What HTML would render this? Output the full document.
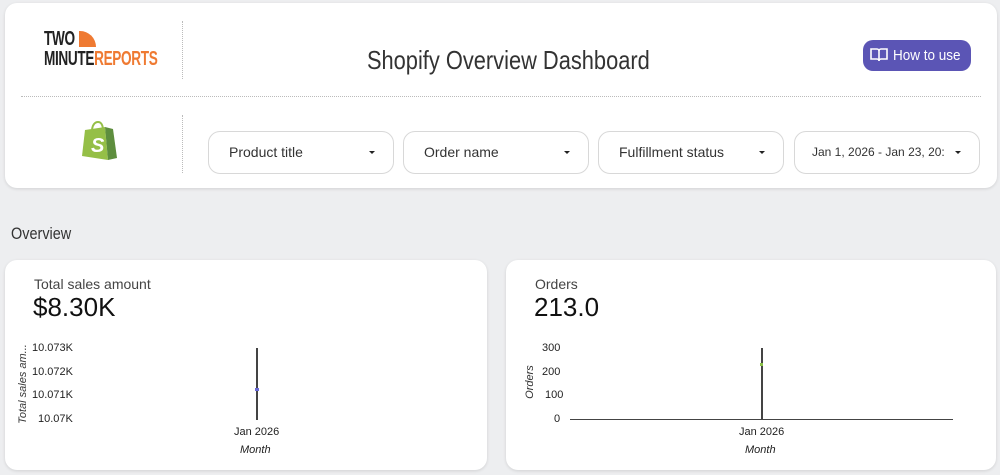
<!DOCTYPE html>
<html><head><style>
*{margin:0;padding:0;box-sizing:border-box}
body{width:1000px;height:475px;background:#edeef0;font-family:"Liberation Sans",sans-serif;position:relative;overflow:hidden;color:#222}
.a{position:absolute}
.card{position:absolute;background:#fff;border-radius:12px;box-shadow:0 1px 3px rgba(0,0,0,.12)}
.vd{position:absolute;width:0;border-left:1px dotted #bbb}
.dd{position:absolute;top:131px;height:43px;border:1px solid #d8d8d8;border-radius:12px;background:#fff;font-size:14px;color:#333;padding-left:20px;line-height:41px}
.dd:after{content:"";position:absolute;right:18px;top:19px;border-left:3.5px solid transparent;border-right:3.5px solid transparent;border-top:3.5px solid #222}
.cond{display:inline-block;transform:scaleX(.85);transform-origin:left}
.tick{font-size:11px;color:#222;position:absolute}
.lg{position:absolute;font-weight:bold;font-size:20px;line-height:20px;white-space:nowrap;transform:scaleX(.68);transform-origin:left;letter-spacing:-.5px}
</style></head><body>
<div class="card" style="left:5px;top:3px;width:992px;height:185px"></div>
<div class="lg" style="left:44px;top:29px;color:#222">TWO</div>
<div class="lg" style="left:44px;top:49px;color:#222">MINUTE<span style="color:#ef7a32">REPORTS</span></div>
<div class="a" style="left:79px;top:31px;width:17px;height:16px;background:#ef7a32;border-radius:0 17px 0 0"></div>
<div class="vd" style="left:182px;top:21px;height:58px"></div>
<div class="vd" style="left:182px;top:115px;height:58px"></div>
<div class="a" style="left:21px;top:96px;width:960px;border-top:1px dotted #bbb"></div>
<div class="a" style="left:300px;top:45px;width:416px;text-align:center;font-size:26px;color:#333"><span style="display:inline-block;transform:scaleX(.84)">Shopify Overview Dashboard</span></div>
<div class="a" style="left:863px;top:40px;width:108px;height:31px;border-radius:10px;background:#5b55b5;color:#fff;font-size:15px;line-height:31px;padding-left:30px"><span class="cond" style="transform:scaleX(.9)">How to use</span></div>
<svg class="a" style="left:870px;top:47px" width="18" height="16" viewBox="0 0 18 16"><path d="M1 2h6a2 2 0 0 1 2 2v10a2 2 0 0 0-2-2H1zM17 2h-6a2 2 0 0 0-2 2v10a2 2 0 0 1 2-2h6z" fill="none" stroke="#fff" stroke-width="1.6"/></svg>
<svg class="a" style="left:80px;top:120px" width="38" height="42" viewBox="0 0 38 42"><path d="M5 10l20-3 3 33-26-4z" fill="#95bf47"/><path d="M25 7l8 2 4 29-9 2z" fill="#5e8e3e"/><path d="M12 11c0-6 3-9 6-9s5 3 5 8" fill="none" stroke="#95bf47" stroke-width="2"/><text x="11" y="32" font-family="Liberation Sans" font-weight="bold" font-style="italic" font-size="20" fill="#fff">S</text></svg>
<div class="dd" style="left:208px;width:186px">Product title</div>
<div class="dd" style="left:403px;width:186px">Order name</div>
<div class="dd" style="left:598px;width:186px">Fulfillment status</div>
<div class="dd" style="left:794px;width:186px;font-size:12px;padding-left:17px">Jan 1, 2026 - Jan 23, 20:</div>
<div class="a" style="left:11px;top:224px;font-size:17px;color:#333"><span class="cond">Overview</span></div>
<div class="card" style="left:5px;top:260px;width:482px;height:210px"></div>
<div class="card" style="left:506px;top:260px;width:490px;height:210px"></div>
<div class="a" style="left:34px;top:276px;font-size:14px;color:#444">Total sales amount</div>
<div class="a" style="left:33px;top:292px;font-size:26px;color:#111">$8.30K</div>
<div class="a" style="left:535px;top:276px;font-size:14px;color:#444">Orders</div>
<div class="a" style="left:534px;top:292px;font-size:26px;color:#111">213.0</div>
<div class="tick" style="left:32px;top:342px">10.073K</div>
<div class="tick" style="left:32px;top:366px">10.072K</div>
<div class="tick" style="left:32px;top:389px">10.071K</div>
<div class="tick" style="left:38px;top:413px">10.07K</div>
<div class="a" style="left:-22px;top:378px;font-size:11px;font-style:italic;color:#333;transform:rotate(-90deg);width:90px;text-align:center">Total sales am...</div>
<div class="a" style="left:256px;top:348px;width:2px;height:72px;background:#444"></div>
<div class="a" style="left:255px;top:388px;width:4px;height:3px;background:#6b6bd6"></div>
<div class="tick" style="left:234px;top:426px">Jan 2026</div>
<div class="tick" style="left:240px;top:444px;font-style:italic">Month</div>
<div class="tick" style="left:542px;top:342px">300</div>
<div class="tick" style="left:542px;top:366px">200</div>
<div class="tick" style="left:545px;top:389px">100</div>
<div class="tick" style="left:554px;top:413px">0</div>
<div class="a" style="left:500px;top:376px;font-size:11px;font-style:italic;color:#333;transform:rotate(-90deg);width:60px;text-align:center">Orders</div>
<div class="a" style="left:570px;top:419px;width:383px;height:1px;background:#444"></div>
<div class="a" style="left:761px;top:348px;width:2px;height:72px;background:#444"></div>
<div class="a" style="left:760px;top:363px;width:3px;height:3px;background:#8bc34a"></div>
<div class="tick" style="left:739px;top:426px">Jan 2026</div>
<div class="tick" style="left:745px;top:444px;font-style:italic">Month</div>
</body></html>
